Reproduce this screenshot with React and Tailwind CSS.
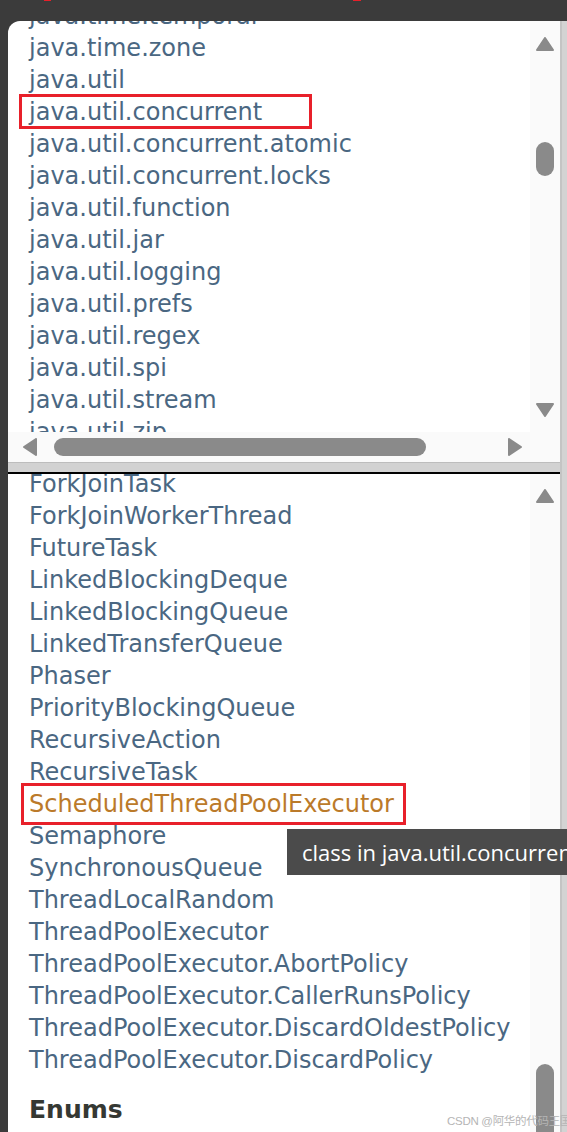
const packages = [
  'java.time.temporal',
  'java.time.zone',
  'java.util',
  'java.util.concurrent',
  'java.util.concurrent.atomic',
  'java.util.concurrent.locks',
  'java.util.function',
  'java.util.jar',
  'java.util.logging',
  'java.util.prefs',
  'java.util.regex',
  'java.util.spi',
  'java.util.stream',
  'java.util.zip',
]

const classes = [
  'ForkJoinTask',
  'ForkJoinWorkerThread',
  'FutureTask',
  'LinkedBlockingDeque',
  'LinkedBlockingQueue',
  'LinkedTransferQueue',
  'Phaser',
  'PriorityBlockingQueue',
  'RecursiveAction',
  'RecursiveTask',
  'ScheduledThreadPoolExecutor',
  'Semaphore',
  'SynchronousQueue',
  'ThreadLocalRandom',
  'ThreadPoolExecutor',
  'ThreadPoolExecutor.AbortPolicy',
  'ThreadPoolExecutor.CallerRunsPolicy',
  'ThreadPoolExecutor.DiscardOldestPolicy',
  'ThreadPoolExecutor.DiscardPolicy',
]

const font = { fontFamily: '"DejaVu Sans", sans-serif' }

function Arrow({ dir }) {
  const pts = {
    up: 'M9 1 L17 13 L1 13 Z',
    down: 'M1 1 L17 1 L9 13 Z',
  }
  return (
    <svg width="18" height="14" viewBox="0 0 18 14">
      <path d={pts[dir]} fill="#8a8a8a" stroke="#8a8a8a" strokeWidth="2" strokeLinejoin="round" />
    </svg>
  )
}

function SideArrow({ dir }) {
  const d = dir === 'left' ? 'M13 1 L13 17 L1 9 Z' : 'M1 1 L1 17 L13 9 Z'
  return (
    <svg width="14" height="18" viewBox="0 0 14 18">
      <path d={d} fill="#8a8a8a" stroke="#8a8a8a" strokeWidth="2" strokeLinejoin="round" />
    </svg>
  )
}

function Row({ children, boxed, orange }) {
  return (
    <div
      className={`relative h-[32px] leading-[32px] pl-[21px] whitespace-nowrap text-[24px] ${
        orange ? 'text-[#bb7a2a]' : 'text-[#4a6782]'
      }`}
    >
      {children}
      {boxed === 'pkg' && (
        <div className="absolute left-[11px] top-[-2px] w-[293px] h-[35px] border-[3px] border-[#e8202a]" />
      )}
      {boxed === 'cls' && (
        <div className="absolute left-[13px] top-[-5px] w-[385px] h-[42px] border-[3px] border-[#e8202a]" />
      )}
    </div>
  )
}

export default function App() {
  return (
    <div className="relative w-[567px] h-[1132px] bg-[#3b3b3b] overflow-hidden" style={font}>
      {/* red bits from annotation above */}
      <div className="absolute left-[44px] top-0 w-[7px] h-[1px] bg-[#e8202a]" />
      <div className="absolute left-[353px] top-0 w-[8px] h-[1px] bg-[#e8202a]" />

      <div className="flex h-full pt-[21px] pl-[8px]">
        <div className="flex-1 flex flex-col bg-white rounded-tl-[12px] overflow-hidden">
          {/* Package pane */}
          <div className="h-[441px] flex flex-col">
            <div className="flex-1 flex min-h-0">
              <div className="flex-1 overflow-hidden">
                <div className="mt-[-21px]">
                  {packages.map((p) => (
                    <Row key={p} boxed={p === 'java.util.concurrent' ? 'pkg' : undefined}>
                      {p}
                    </Row>
                  ))}
                </div>
              </div>
              <div className="w-[30px] bg-[#fafafa] flex flex-col items-center pt-[16px]">
                <Arrow dir="up" />
                <div className="mt-[91px] w-[18px] h-[34px] rounded-full bg-[#8a8a8a]" />
                <div className="mt-auto mb-[15px]">
                  <Arrow dir="down" />
                </div>
              </div>
            </div>
            <div className="h-[30px] bg-[#fafafa] flex items-center pl-[15px] pr-[38px]">
              <SideArrow dir="left" />
              <div className="ml-[17px] w-[372px] h-[18px] rounded-full bg-[#8a8a8a]" />
              <div className="ml-auto">
                <SideArrow dir="right" />
              </div>
            </div>
          </div>

          {/* Splitter */}
          <div className="h-[12px] border-t border-[#bdbdbd] bg-[#d2d2d2] border-b-2 border-b-black" />

          {/* Class pane */}
          <div className="flex-1 flex min-h-0">
            <div className="flex-1 overflow-hidden">
              <div className="mt-[-6px]">
                {classes.map((c) => (
                  <Row
                    key={c}
                    boxed={c === 'ScheduledThreadPoolExecutor' ? 'cls' : undefined}
                    orange={c === 'ScheduledThreadPoolExecutor'}
                  >
                    {c}
                  </Row>
                ))}
                <div className="mt-[18px] pl-[21px] h-[32px] leading-[32px] text-[25px] font-bold text-[#353833]">
                  Enums
                </div>
              </div>
            </div>
            <div className="w-[30px] bg-[#fafafa] flex flex-col items-center pt-[15px]">
              <Arrow dir="up" />
              <div className="mt-auto w-[18px] h-[80px] rounded-t-full bg-[#8a8a8a] mb-[-12px]" />
            </div>
          </div>
        </div>
        <div className="w-[7px] border-l-2 border-[#c4c4c4] bg-[#d3d3d3]" />
      </div>

      {/* tooltip */}
      <div
        className="absolute left-[287px] top-[829px] w-[320px] h-[46px] bg-[#4b4b4b] text-white text-[22px] leading-[46px] pl-[15px] whitespace-nowrap"
        style={{ fontFamily: '"Open Sans", sans-serif' }}
      >
        class in java.util.concurrent
      </div>

      {/* watermark */}
      <div
        className="absolute left-[447px] top-[1113px] text-[11.5px] leading-[16px] text-[#b5b5b5] whitespace-nowrap tracking-[-0.3px]"
        style={{ fontFamily: '"Liberation Sans", "Noto Sans CJK SC", sans-serif' }}
      >
        CSDN @阿华的代码王国
      </div>
    </div>
  )
}
